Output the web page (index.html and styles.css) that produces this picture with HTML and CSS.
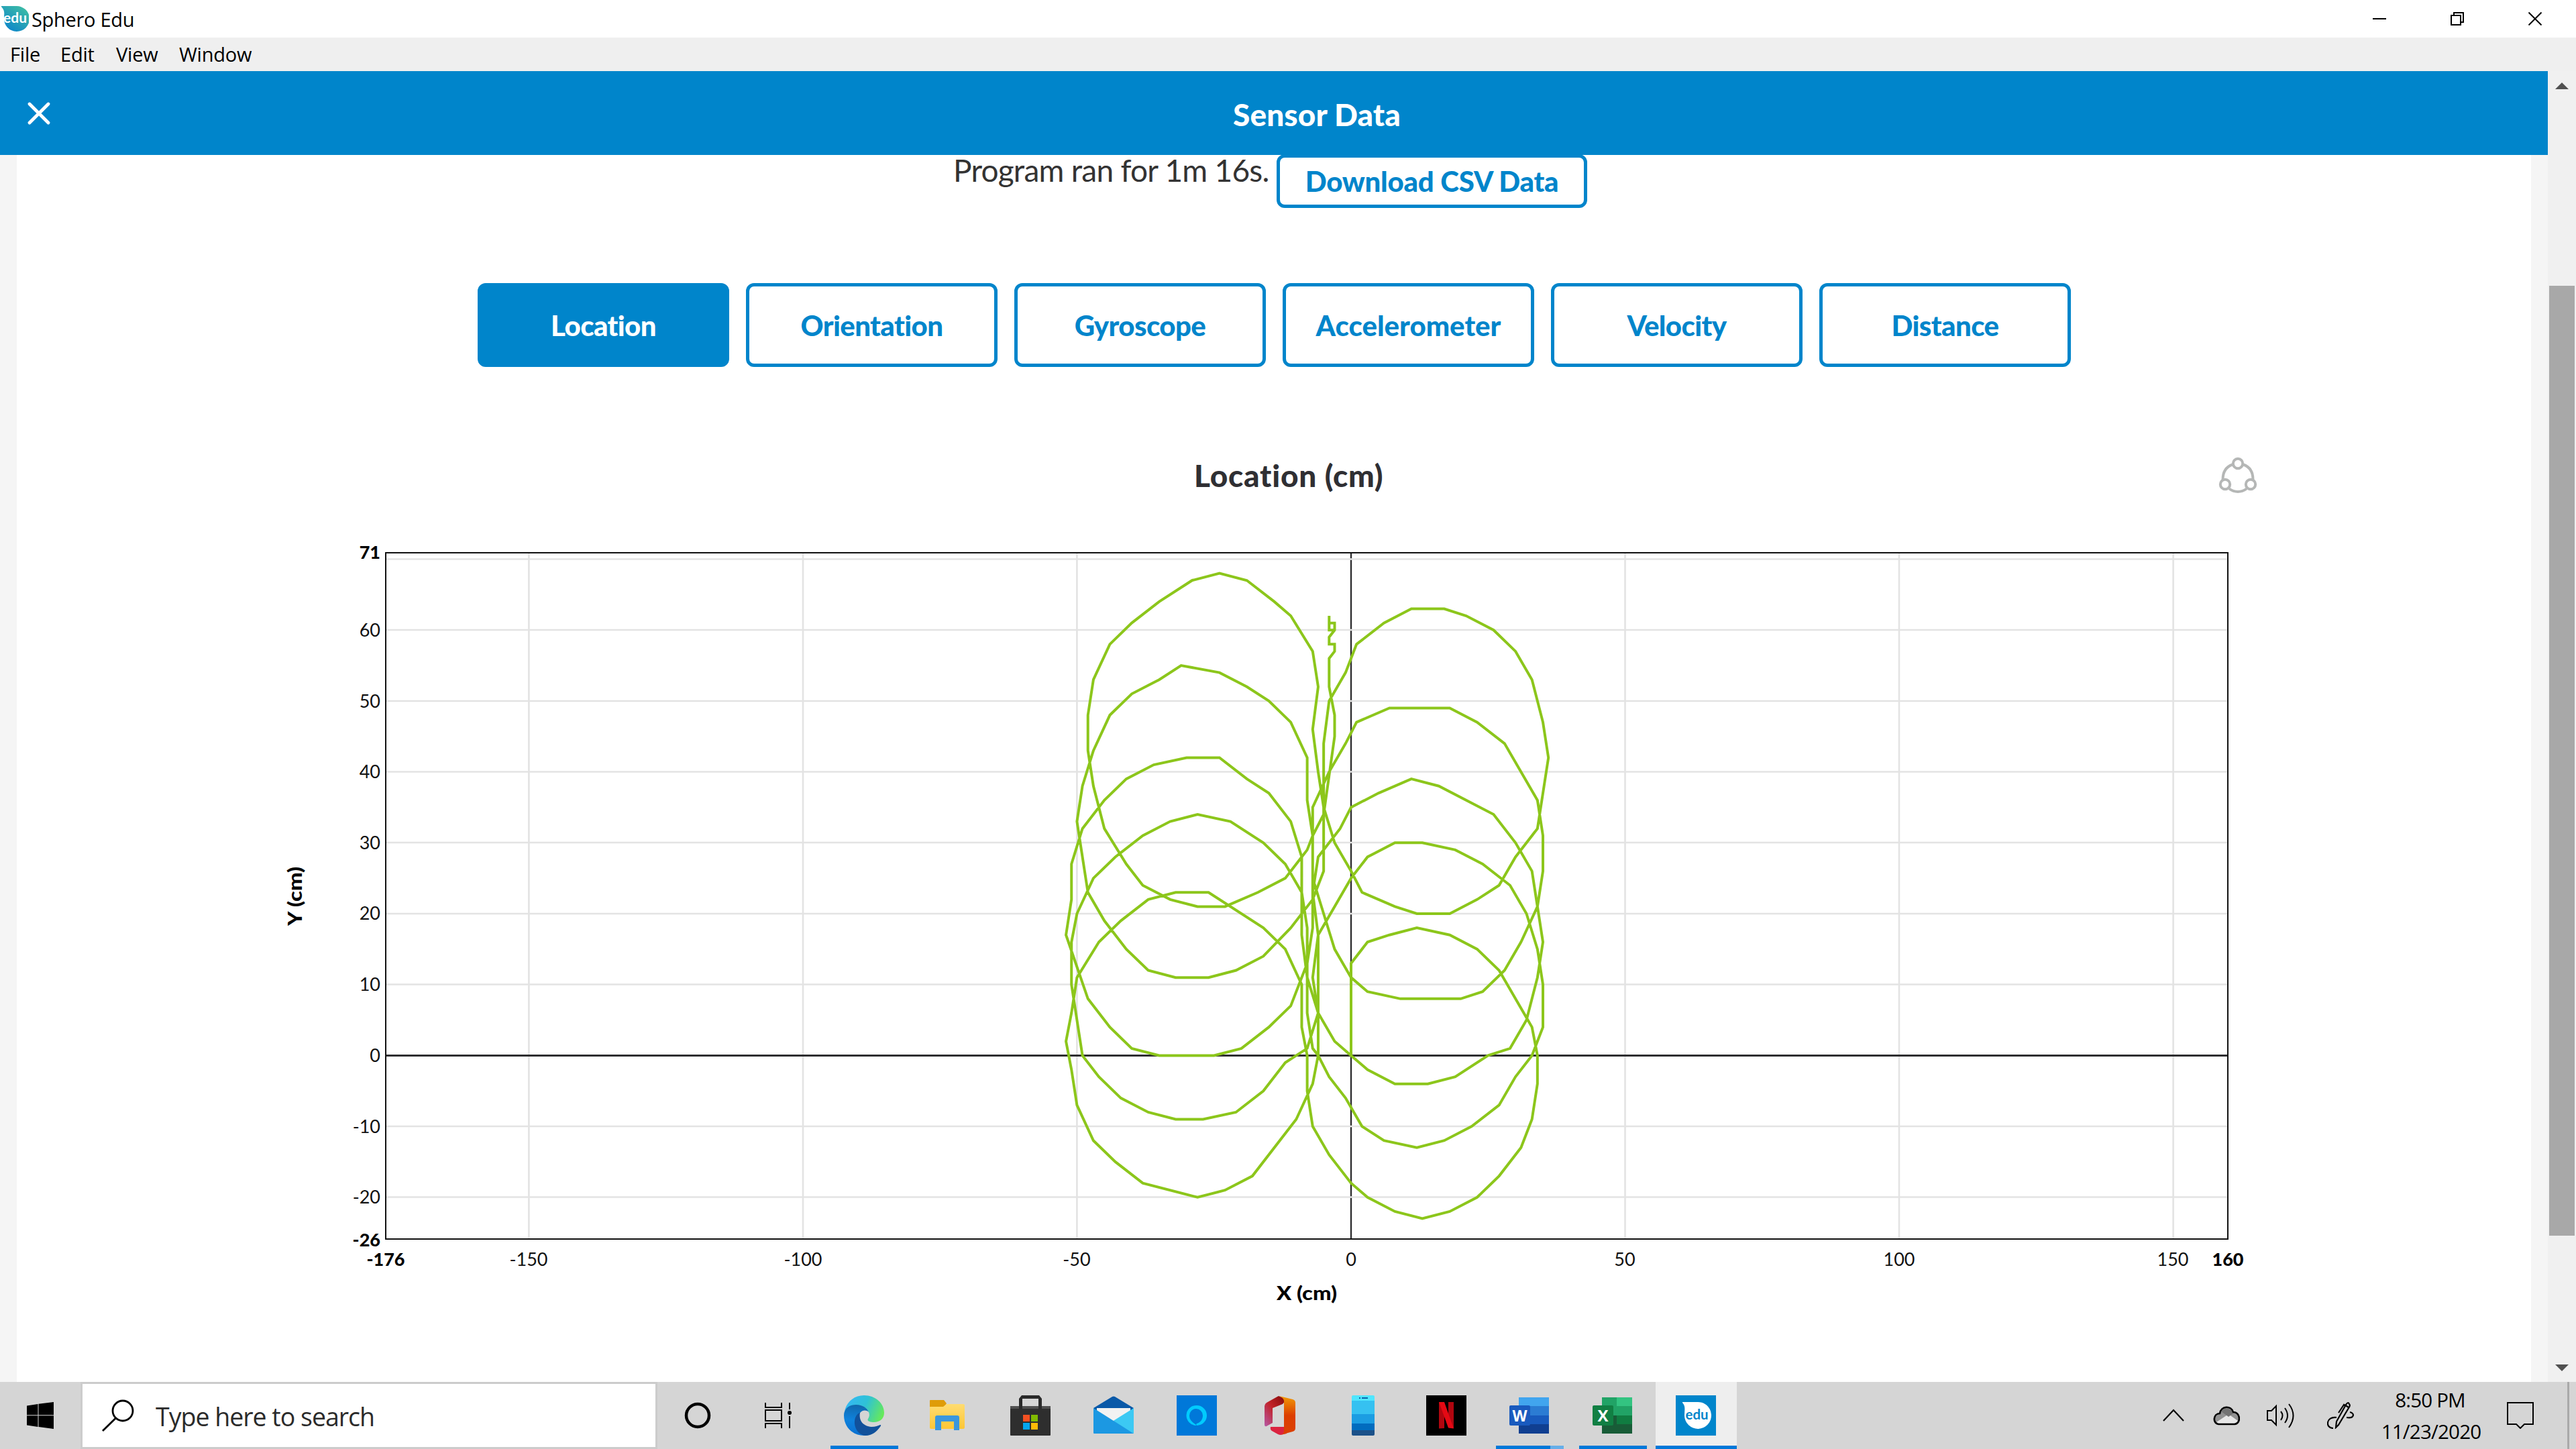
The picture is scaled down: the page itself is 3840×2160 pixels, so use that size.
FILE: index.html
```html
<!DOCTYPE html>
<html lang="en">
<head>
<meta charset="utf-8">
<title>Sphero Edu</title>
<link rel="stylesheet" href="styles.css">
</head>
<body>
<div class="titlebar">
  <svg class="app-logo" width="42" height="40" viewBox="0 0 42 40">
    <defs><linearGradient id="lg" x1="1" y1="0" x2="0.2" y2="1"><stop offset="0" stop-color="#45c4a0"/><stop offset="1" stop-color="#0a83cc"/></linearGradient></defs>
    <path d="M1 1h22a19 19 0 1 1-18 18C5 13 7 8 1 2z" fill="url(#lg)"/>
    <text x="4" y="26" class="edu" font-size="21" textLength="35" lengthAdjust="spacingAndGlyphs" fill="#fff">edu</text>
  </svg>
  <span class="app-name">Sphero Edu</span>
  <div class="win-controls">
    <svg width="20" height="22" viewBox="0 0 20 22"><path d="M0 11h20" stroke="#000" stroke-width="2"/></svg>
    <svg width="20" height="20" viewBox="0 0 20 20" fill="none" stroke="#000" stroke-width="2"><path d="M1 5h14v14H1zM5 5V1h14v14h-4"/></svg>
    <svg width="20" height="20" viewBox="0 0 20 20"><path d="M.5.5l19 19M19.500.5l-19 19" stroke="#000" stroke-width="2"/></svg>
  </div>
</div>
<div class="menubar"><span class="m1">File</span><span class="m2">Edit</span><span class="m3">View</span><span class="m4">Window</span></div>
<div class="viewport">
  <div class="page">
    <header class="header">
      <svg class="close" width="34" height="34" viewBox="0 0 34 34"><path d="M3 3l28 28M31 3L3 31" stroke="#fff" stroke-width="4.800" stroke-linecap="round"/></svg>
      <h1>Sensor Data</h1>
    </header>
    <main class="card">
      <div class="run"><span class="run-text">Program ran for 1m 16s.</span><button class="download"><span>Download CSV Data</span></button></div>
      <nav class="tabs">
        <button class="tab active">Location</button>
        <button class="tab">Orientation</button>
        <button class="tab">Gyroscope</button>
        <button class="tab wide">Accelerometer</button>
        <button class="tab">Velocity</button>
        <button class="tab">Distance</button>
      </nav>
      <div class="chart-head">
        <h2>Location (cm)</h2>
        <svg class="share" width="58" height="56" viewBox="0 0 58 56" fill="none" stroke="#b5b7b6" stroke-width="4"><circle cx="29" cy="10" r="7.200"/><circle cx="10" cy="41" r="7.200"/><circle cx="48" cy="41" r="7.200"/><path d="M21 11.500C11 15 6.500 23 6.500 34M37 11.500c10 3.500 14.500 11.500 14.500 22.500M16 47.500c8 6 18 6 26 0"/></svg>
      </div>
      <svg class="chart" width="3000" height="1200" viewBox="400 790 3000 1200">
        <g class="grid">
          <path d="M788.400 824V1847M1197 824V1847M1605.400 824V1847M2422.500 824V1847M2831 824V1847M3239.600 824V1847"/>
        </g>
        <path d="M2014 824V1847" stroke="#2e2e30" stroke-width="2.400"/>
        <g class="grid"><path d="M576 833.500H3321M576 939H3321M576 1045H3321M576 1150.500H3321M576 1256H3321M576 1362H3321M576 1467.500H3321M576 1679H3321M576 1784.500H3321"/></g>
        <path d="M576 1573.400H3321" stroke="#2e2e30" stroke-width="3"/>
        <path d="M575 824H3321V1847H575z" fill="none" stroke="#111" stroke-width="2"/>
        <polyline class="track" transform="translate(2014 1573.400) scale(8.172 -10.570)" points="0,0 0,13 3,16 7,17 12,18 18,17 23,15 27,12 33,4 34,0 34,-4 33,-9 31,-13 27,-17 23,-20 18,-22 13,-23 8,-22 3,-20 0,-18 -4,-14 -7,-10 -8,-5 -8,0 -9,4 -9,10 -12,15 -16,18 -26,23 -32,23 -37,22 -42,19 -46,16 -50,11 -51,6 -52,2 -51,-2 -50,-7 -47,-12 -43,-15 -38,-18 -28,-20 -23,-19 -18,-17 -10,-9 -7,-4 -6,0 -6,17 0,25 3,28 8,30 13,30 19,29 24,27 29,24 32,20 34,15 35,10 35,4 33,0 30,-3 27,-7 22,-10 17,-12 12,-13 6,-12 2,-10 -1,-6 -4,-3 -6,0 -7,1 -8,6 -8,18 -9,23 -12,27 -16,30 -22,33 -28,34 -33,33 -38,31 -43,28 -47,25 -50,20 -51,16 -51,10 -49,0 -46,-3 -42,-6 -37,-8 -32,-9 -27,-9 -21,-8 -16,-5 -12,-1 -8,1 -6,6 -7,11 -6,17 -7,23 -6,28 -2,32 0,35 5,37 11,39 16,38 26,34 30,30 33,26 34,21 35,16 34,11 32,5 29,1 25,0 19,-3 14,-4 8,-4 3,-2 0,0 -3,2 -6,6 -8,11 -9,17 -9,28 -11,33 -15,37 -19,39 -24,42 -30,42 -36,41 -41,39 -45,36 -49,32 -51,27 -51,22 -52,17 -48,8 -44,4 -40,1 -35,0 -25,0 -20,1 -15,4 -11,7 -8,13 -7,18 -7,35 -4,40 -1,44 1,47 7,49 18,49 23,47 28,44 34,36 35,31 35,26 34,21 31,16 28,12 24,9 20,8 9,8 3,9 0,11 -3,15 -5,20 -7,25 -7,31 -8,36 -8,42 -11,47 -15,50 -19,52 -24,54 -31,55 -35,53 -40,51 -44,48 -47,43 -49,38 -50,33 -48,23 -45,19 -41,15 -37,12 -32,11 -26,11 -21,12 -16,14 -11,18 -7,22 -5,26 -5,44 -4,50 -1,54 1,58 6,61 11,63 17,63 21,62 26,60 30,57 33,53 35,47 36,42 34,32 30,28 27,24 23,22 18,20 12,20 8,21 2,23 0,26 -3,30 -5,35 -6,40 -7,46 -6,52 -7,57 -11,62 -14,64 -19,67 -24,68 -29,67 -35,64 -40,61 -44,58 -47,53 -48,48 -48,43 -47,38 -45,32 -41,27 -38,24 -33,22 -28,21 -23,21 -17,23 -12,25 -8,29 -7,31 -5,34 -3,45 -3,48 -4,52 -4,56 -3,57 -3,58 -4,58 -4,59 -3,60 -3,61 -4,61 -4,60 -3,60 -4,60 -4,62"/>
        <g class="tick ty">
          <text x="567" y="949">60</text><text x="567" y="1055">50</text><text x="567" y="1160">40</text><text x="567" y="1266">30</text><text x="567" y="1371">20</text><text x="567" y="1477">10</text><text x="567" y="1583">0</text><text x="567" y="1689">-10</text><text x="567" y="1794">-20</text>
          <text class="b" x="567" y="833">71</text><text class="b" x="567" y="1858">-26</text>
        </g>
        <g class="tick tx">
          <text x="788" y="1887">-150</text><text x="1197" y="1887">-100</text><text x="1605" y="1887">-50</text><text x="2014" y="1887">0</text><text x="2422" y="1887">50</text><text x="2831" y="1887">100</text><text x="3239" y="1887">150</text>
          <text class="b" x="575" y="1887">-176</text><text class="b" x="3321" y="1887">160</text>
          <text class="b name" x="1948" y="1938" textLength="90" lengthAdjust="spacingAndGlyphs">X (cm)</text>
          <text class="b name" transform="translate(450 1336) rotate(-90)" textLength="88" lengthAdjust="spacingAndGlyphs">Y (cm)</text>
        </g>
      </svg>
    </main>
  </div>
  <div class="scrollbar">
    <svg width="20" height="10" viewBox="0 0 20 10"><path d="M0 10L10 0l10 10z" fill="#505050"/></svg>
    <div class="thumb"></div>
    <svg width="20" height="10" viewBox="0 0 20 10"><path d="M0 0l10 10L20 0z" fill="#505050"/></svg>
  </div>
</div>
<footer class="taskbar">
  <div class="slot"><svg width="40" height="40" viewBox="0 0 40 40"><path d="M0 5.500L16.500 3v16.300H0zM17.500 2.800L40 0v19.300H17.500zM0 20.300h16.500v16.600L0 34.500zM17.500 20.300H40V40l-22.500-3z"/></svg></div>
  <div class="search">
    <svg width="50" height="50" viewBox="0 0 50 50" fill="none" stroke="#000" stroke-width="2.800"><circle cx="31" cy="18" r="15"/><path d="M20.500 29L1 48"/></svg>
    <span>Type here to search</span>
  </div>
  <div class="slot"><svg width="40" height="40" viewBox="0 0 40 40"><circle cx="20" cy="20" r="17" fill="none" stroke="#000" stroke-width="4.500"/></svg></div>
  <div class="slot"><svg width="40" height="40" viewBox="0 0 40 40" fill="none" stroke="#000" stroke-width="2"><path d="M1 1v7h24V1M1 12h24v16H1zM1 39v-7h24v7M37 1v10M37 21v18"/><circle cx="37" cy="16" r="3" fill="#000" stroke="none"/></svg></div>
  <div class="apps">
    <div class="app run1"><svg width="60" height="60" viewBox="0 0 60 60">
      <defs><linearGradient id="e1" x1="0" y1=".3" x2="1" y2=".6"><stop offset="0" stop-color="#35b8f5"/><stop offset=".5" stop-color="#2fc2d6"/><stop offset="1" stop-color="#66e95a"/></linearGradient><linearGradient id="e2" x1=".4" y1="0" x2=".3" y2="1"><stop offset="0" stop-color="#1168ac"/><stop offset=".5" stop-color="#0f82dc"/><stop offset="1" stop-color="#0a6fd0"/></linearGradient></defs>
      <path d="M1 24C4 9 16 0 30 0c17 0 30 12 30 26 0 9-7 14-15 14-7 0-11-2-9-5 5-7 0-19-15-20C12 14 4 18 1 24z" fill="url(#e1)"/>
      <path d="M0 30C0 20 8 14 18 14c10 0 17 5 19 11-7-6-15 0-15 8 0 12 9 22 20 24-4 2-8 3-12 3C13 60 0 47 0 30z" fill="url(#e2)"/>
      <path d="M24 26c-2 12 5 20 17 21 6 0 10-2 13-3 2 0 1 2 0 3-5 7-12 13-22 13-10-1-17-11-16-22 1-7 4-11 8-12z" fill="#11519b"/>
    </svg></div>
    <div class="app"><svg width="60" height="60" viewBox="0 0 60 60">
      <defs><linearGradient id="f1" x1="0" y1="0" x2="0" y2="1"><stop offset="0" stop-color="#ffdc71"/><stop offset="1" stop-color="#fec636"/></linearGradient></defs>
      <path d="M4 8q0-1 1-1h20l4 5-4 6H4z" fill="#df9c08"/><path d="M4 17h20l5-4h25q2 0 2 2v33q0 2-2 2H6q-2 0-2-2z" fill="url(#f1)"/>
      <path d="M12 52V33q0-3 3-3h30q3 0 3 3v19h-8V39H21v13z" fill="#3b97dd"/>
    </svg></div>
    <div class="app"><svg width="60" height="60" viewBox="0 0 60 60">
      <path d="M0 16h60v43q0 1-1 1H1q-1 0-1-1z" fill="#2e2e2e"/><path d="M0 16h60v4H0z" fill="#505050"/><path d="M13 20V5l4-5h26l4 5v15h-5V5H18v15z" fill="#2a2a2a"/>
      <path d="M19 29h10v10H19z" fill="#f35022"/><path d="M31 29h10v10H31z" fill="#80bb02"/><path d="M19 41h10v10H19z" fill="#05a6f0"/><path d="M31 41h10v10H31z" fill="#ffba07"/>
    </svg></div>
    <div class="app"><svg width="60" height="60" viewBox="0 0 60 60">
      <path d="M0 19L28 2q2-1 4 0l28 17-5 5H5z" fill="#0a59a8"/><path d="M5 19h50v10L30 44 5 28z" fill="#f2f2f2"/><path d="M60 19v38L28 39z" fill="#3cc9f3"/><path d="M0 19l60 38H1q-1 0-1-1z" fill="#1c98e2"/>
    </svg></div>
    <div class="app"><svg width="60" height="60" viewBox="0 0 60 60"><path d="M0 0h60v60H0z" fill="#0078d9"/><path fill-rule="evenodd" d="M30 15a15 15 0 0 1 0 30c-1-1-1-2 0-3 5-1 9-6 9-12a10 10 0 1 0-20 0c0 6 3 9 10 14v1A15 15 0 0 1 30 15z" fill="#01cbfd"/></svg></div>
    <div class="app"><svg width="60" height="60" viewBox="0 0 60 60">
      <defs><linearGradient id="o1" x1="0" y1="0" x2="0" y2="1"><stop offset="0" stop-color="#f19a05"/><stop offset=".5" stop-color="#dc3e00"/><stop offset="1" stop-color="#db4002"/></linearGradient><linearGradient id="o2" x1="1" y1="0" x2="0" y2="1"><stop offset="0" stop-color="#7c0808"/><stop offset=".5" stop-color="#c12126"/><stop offset="1" stop-color="#b659a5"/></linearGradient></defs>
      <path d="M28 1l12 5-6 7-15 6v22l-9 5q-3 1-3-3V16q0-3 3-5L26 2z" fill="url(#o2)"/><path d="M16 47h24v10l-9 2q-2 0-4-1l-9-5q-3-2-2-6z" fill="#db2340"/><path d="M29 1l20 5q4 1 4 5v38q0 4-4 5l-18 5q5-2 5-6V9q0-5-7-8z" fill="url(#o1)"/>
    </svg></div>
    <div class="app"><svg width="60" height="60" viewBox="0 0 60 60"><path d="M13 2q0-2 2-2h30q2 0 2 2v6H13z" fill="#50e6ff"/><path d="M13 8h34v20H13z" fill="#36c1f1"/><path d="M13 28h34v14H13z" fill="#1c9de2"/><path d="M13 42h34v10H13z" fill="#016cbf"/><path d="M13 52h34v6q0 2-2 2H15q-2 0-2-2z" fill="#1b5189"/><path d="M24 3h2v2h-2zM28 3h9v2h-9z" fill="#0b63a9"/></svg></div>
    <div class="app"><svg width="60" height="60" viewBox="0 0 60 60"><path d="M0 0h60v60H0z"/><path d="M19 10h8v39l-8 .5zM33 10h8v39l-8-1z" fill="#b1060f"/><path d="M19 10h8l14 39.500-8-1z" fill="#e50914"/></svg></div>
    <div class="app run2"><svg width="60" height="60" viewBox="0 0 60 60"><path d="M14 3h45v14H14z" fill="#41a5ee"/><path d="M14 16h45v14H14z" fill="#2b7cd3"/><path d="M14 30h45v14H14z" fill="#185abd"/><path d="M14 43h45v14H14z" fill="#103f91"/><rect y="15" width="31" height="30" rx="2" fill="#195abe"/><text x="15.500" y="38.500" class="letter" textLength="22" lengthAdjust="spacingAndGlyphs">W</text></svg></div>
    <div class="app run1"><svg width="60" height="60" viewBox="0 0 60 60"><path d="M14 3h23v27H14z" fill="#21a366"/><path d="M36 3h23v14H36z" fill="#33c481"/><path d="M36 16h23v14H36z" fill="#21a366"/><path d="M14 30h23v27H14z" fill="#185c37"/><path d="M36 30h23v14H36z" fill="#107c41"/><path d="M36 43h23v14H36z" fill="#185c37"/><rect y="15" width="31" height="30" rx="2" fill="#117f43"/><text x="15.500" y="38.500" class="letter" textLength="16" lengthAdjust="spacingAndGlyphs">X</text></svg></div>
    <div class="app current"><svg width="60" height="60" viewBox="0 0 60 60"><path d="M0 0h60v60H0z" fill="#0085cb"/><path d="M10 10h21a20 20 0 1 1-18 20C13 22 15 16 10 11z" fill="#fff"/><text x="14.500" y="36" class="edu" font-size="21" textLength="34" lengthAdjust="spacingAndGlyphs" fill="#0085cb">edu</text></svg></div>
  </div>
  <div class="tray">
    <svg width="32" height="20" viewBox="0 0 32 20"><path d="M1 18L16 2l15 16" fill="none" stroke="#000" stroke-width="2.200"/></svg>
    <svg width="40" height="40" viewBox="0 0 40 40"><path d="M8 33C-1 32 0 17 10 17 12 5 27 5 30 15c11 0 12 17 2 18z" fill="#929292"/><path d="M5 30l18-12 14 10q-1 5-5 5H8z" fill="#e8e8e8"/><path d="M12 14q6-8 15-2l3 5-7 5z" fill="#737373"/><path d="M8 33C-1 32 0 17 10 17 12 5 27 5 30 15c11 0 12 17 2 18z" fill="none" stroke="#000" stroke-width="2.600"/></svg>
    <svg width="42" height="40" viewBox="0 0 42 40" fill="none" stroke="#000" stroke-width="2"><path d="M1 13h6l7-7v28l-7-7H1zM21 14q5 6 0 13M27 9q8 11 0 22M33 3q13 17 0 35"/></svg>
    <svg width="40" height="40" viewBox="0 0 40 40" fill="none" stroke="#000" stroke-width="2.200"><path d="M13 38l1-9L28 4q3-5 5-1 2 2-1 6L17 34zM27 6l-2-2-8 12M26 4l6 4M14 23C-2 21-3 39 9 39M34 15c8 2 6 10-5 8"/></svg>
    <div class="clock"><span class="time">8:50 PM</span><span class="date">11/23/2020</span></div>
    <svg width="40" height="40" viewBox="0 0 40 40" fill="none" stroke="#000" stroke-width="2"><path d="M1 1h38v32H26l-6 6-6-6H1z"/></svg>
  </div>
  <div class="peek"></div>
</footer>
</body>
</html>
```
FILE: styles.css
```css
* { box-sizing: border-box; }
body { margin: 0; width: 3840px; height: 2160px; overflow: hidden; display: flex; flex-direction: column; background: #fff; font-family: "Open Sans", "Noto Sans", sans-serif; color: #000; }
svg { display: block; flex: none; }
span { white-space: nowrap; }

.titlebar { height: 56px; display: flex; align-items: center; padding-right: 51px; }
.app-logo { margin: 0 4px 0 1px; }
.app-name { font-size: 29px; letter-spacing: -0.3px; }
.win-controls { margin-left: auto; display: flex; align-items: center; gap: 96px; }
.edu { font-family: Lato, sans-serif; font-weight: 700; }

.menubar { height: 50px; background: #efefef; display: flex; align-items: center; padding-left: 15px; font-size: 29px; letter-spacing: -0.2px; line-height: 46px; padding-bottom: 1px; }
.m1 { width: 75px; }
.m2 { width: 83px; }
.m3 { width: 94px; }

.viewport { flex: 1; display: flex; min-height: 0; }
.page { width: 3798px; background: #f5f5f5; font-family: Lato, sans-serif; }
.header { height: 125px; background: #0085cb; display: flex; align-items: center; padding-left: 41px; }
.header h1 { margin: 4px 0 0; flex: 1; padding-left: 53px; text-align: center; color: #fff; font-size: 46px; font-weight: 900; line-height: 60px; letter-spacing: 0.1px; }
.card { margin: 0 25px; height: 1829px; background: #fff; display: flex; flex-direction: column; }
.run { height: 78px; display: flex; padding-left: 1396px; }
.run-text { width: 482px; margin-top: -2px; font-size: 46px; line-height: 50px; letter-spacing: -0.75px; color: #333; }
.download { width: 463px; height: 80px; margin-top: -1px; padding: 0; border: 5px solid #0085cb; border-radius: 12px; background: #fff; color: #0085cb; font: 900 42px/68px Lato, sans-serif; letter-spacing: -0.25px; }
.tabs { margin-top: 113px; padding-left: 687px; display: flex; gap: 25px; }
.tab { width: 375px; height: 125px; padding: 0; border: 5px solid #0085cb; border-radius: 12px; background: #fff; color: #0085cb; font: 900 42px/117px Lato, sans-serif; letter-spacing: -0.6px; }
.tab.wide { letter-spacing: 0; }
.tab.active { background: #0085cb; color: #fff; }
.chart-head { height: 243px; display: flex; align-items: center; padding-top: 81px; }
.chart-head h2 { margin: 0 0 0 1755px; width: 1527px; font-size: 46px; font-weight: 900; color: #2f2f33; line-height: 60px; letter-spacing: 0.75px; }
.chart { margin-left: 375px; }
.grid path { stroke: #e3e3e3; stroke-width: 2.6px; }
.track { fill: none; stroke: #8cc61b; stroke-width: 4px; vector-effect: non-scaling-stroke; }
.tick { font: 27px Lato, sans-serif; fill: #111; }
.tick .b { font-weight: 900; fill: #000; }
.tick .name { font-size: 29px; }
.ty { text-anchor: end; }
.tx { text-anchor: middle; }

.scrollbar { width: 42px; background: #f0f0f0; display: flex; flex-direction: column; align-items: center; padding: 17px 0 16px; }
.thumb { width: 38px; height: 1416px; margin: 293px 0 192px; background: #a8a8a8; }

.taskbar { height: 100px; background: #d5d5d5; display: flex; }
.slot { width: 120px; display: flex; align-items: center; justify-content: center; }
.search { width: 860px; border: 3px solid #ccc; background: #fff; display: flex; align-items: center; padding-left: 29px; font-size: 37.5px; letter-spacing: -1px; color: #2b2b2b; }
.search span { margin: 3px 0 0 30px; }
.letter { font: 700 24px "Open Sans", sans-serif; fill: #fff; text-anchor: middle; }
.apps { display: flex; padding-left: 6px; }
.app { width: 124px; display: flex; align-items: center; justify-content: center; border-bottom: 5px solid transparent; padding-top: 5px; }
.run1 { background: linear-gradient(#0078d9, #0078d9) 12px 100% / 101px 5px no-repeat border-box; }
.run2 { background: linear-gradient(90deg, #0078d9 81px, #66aee8 81px) 12px 100% / 101px 5px no-repeat border-box; }
.current { background: linear-gradient(#0078d9, #0078d9) 2px 100% / 121px 5px no-repeat border-box, linear-gradient(#eee, #eee) 2px 0 / 121px 100px no-repeat border-box; }
.tray { margin-left: auto; display: flex; align-items: center; }
.tray > svg:nth-child(1) { margin-right: 43px; }
.tray > svg:nth-child(2) { margin-right: 40px; }
.tray > svg:nth-child(3) { margin-right: 48px; }
.tray > svg:nth-child(4) { margin-right: 29px; }
.clock { width: 172px; margin-right: 27px; display: flex; flex-direction: column; align-items: center; font-size: 29.500px; line-height: 47px; letter-spacing: -0.8px; }
.time { margin-left: -3px; }
.peek { width: 13px; margin-left: 50px; border-left: 3px solid #a9a9a9; }
```
